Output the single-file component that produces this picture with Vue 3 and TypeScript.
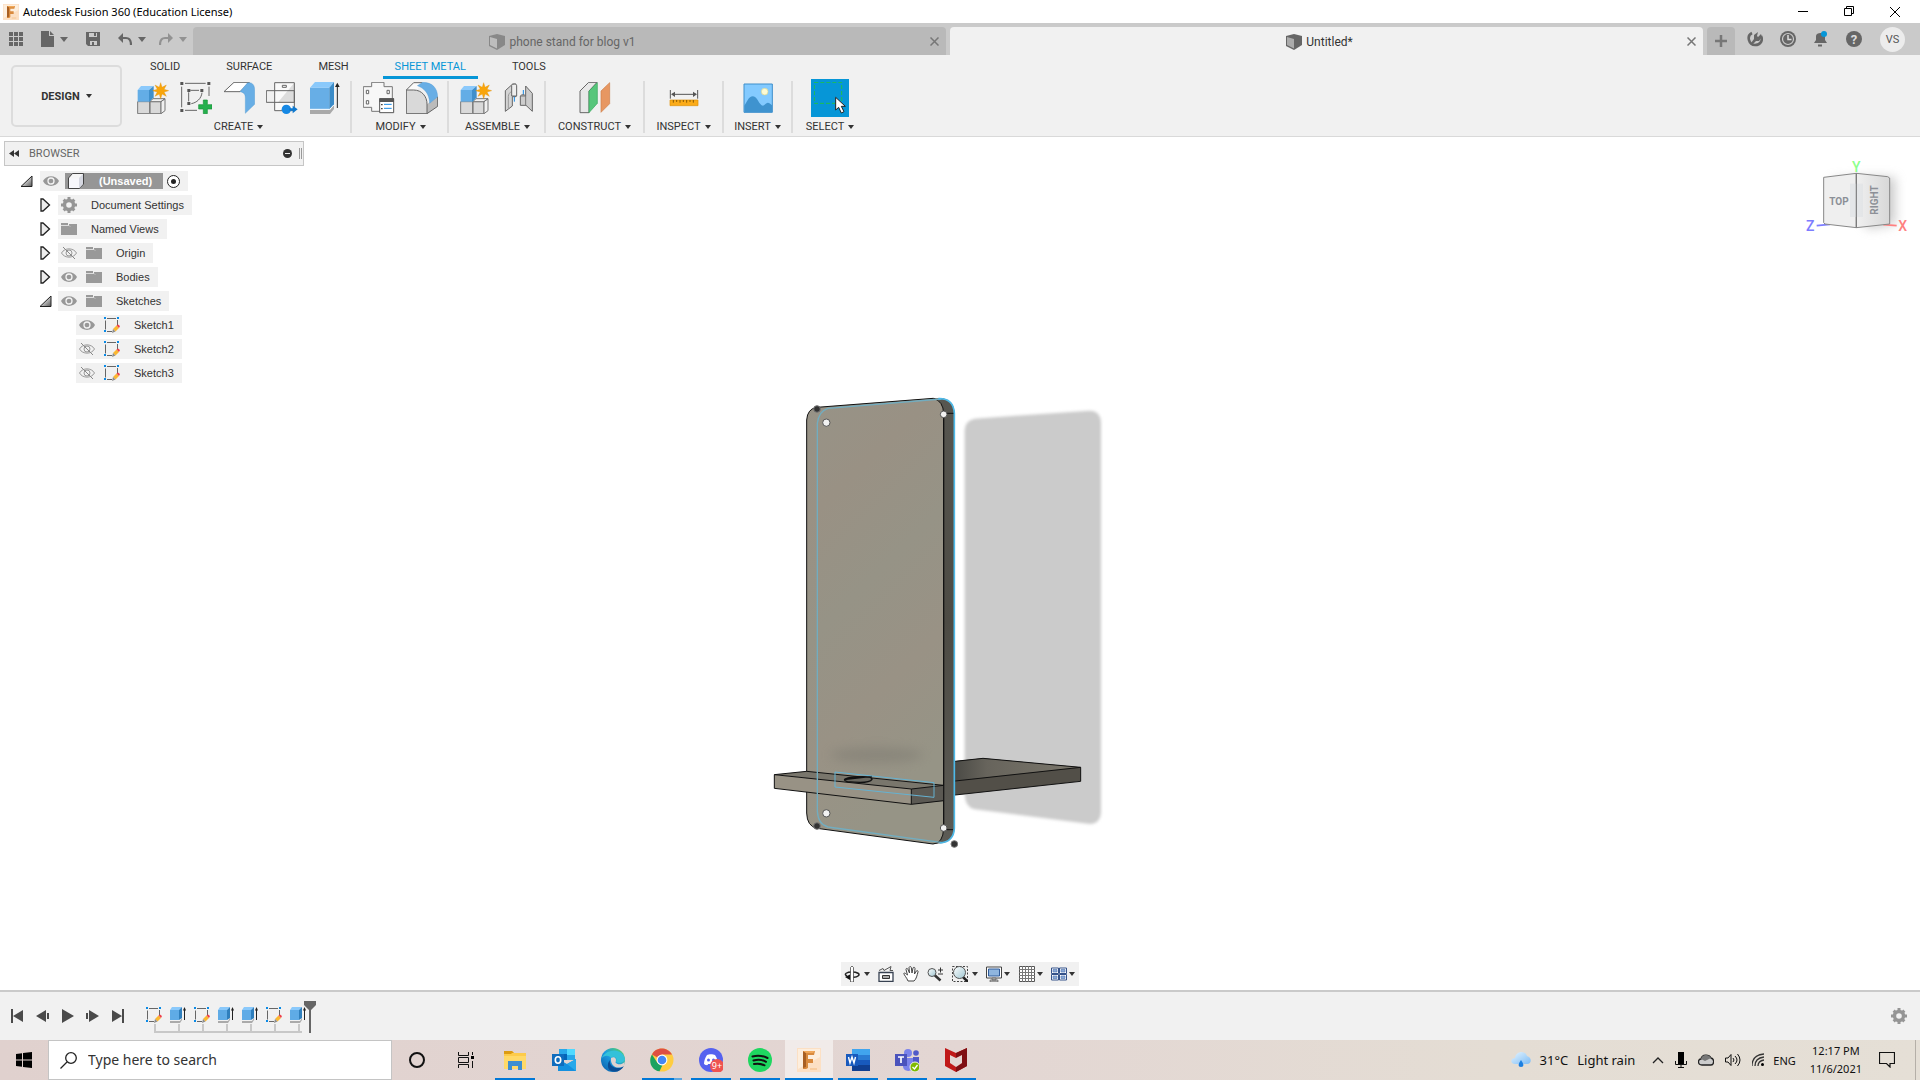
<script setup lang="ts">
import { ref } from 'vue'

interface RibbonGroup {
  name: string
  cls: string
  icons: { id: string; label: string; box: string }[]
}
interface TreeNode {
  label: string
  level: number
  state: 'open' | 'closed' | 'leaf'
  eye: 'on' | 'off' | null
  icon: string
}

function star(cx: number, cy: number, outer: number, inner: number, points: number): string {
  const out: string[] = []
  for (let i = 0; i < points * 2; i++) {
    const r = i % 2 === 0 ? outer : inner
    const a = (Math.PI * i) / points - Math.PI / 2
    out.push(`${(cx + r * Math.cos(a)).toFixed(1)},${(cy + r * Math.sin(a)).toFixed(1)}`)
  }
  return out.join(' ')
}
const sparkle = star(121, 62, 24, 11, 8)

const ribbonTabs = ['SOLID', 'SURFACE', 'MESH', 'SHEET METAL', 'TOOLS']
const activeTab = ref('SHEET METAL')

const groups: RibbonGroup[] = [
  {
    name: 'CREATE',
    cls: 'g-create',
    icons: [
      { id: 'component', label: 'New Component', box: '50 36 96 96' },
      { id: 'newsketch', label: 'Create Sketch', box: '179 36 96 96' },
      { id: 'flange', label: 'Flange', box: '309 36 96 96' },
      { id: 'unfold', label: 'Unfold', box: '438 36 96 96' },
      { id: 'extrude', label: 'Extrude', box: '567 36 96 96' },
    ],
  },
  {
    name: 'MODIFY',
    cls: 'g-modify',
    icons: [
      { id: 'rules', label: 'Sheet Metal Rules', box: '729 36 96 96' },
      { id: 'fillet', label: 'Fillet', box: '858 36 96 96' },
    ],
  },
  {
    name: 'ASSEMBLE',
    cls: 'g-modify',
    icons: [
      { id: 'component', label: 'New Component', box: '50 36 96 96' },
      { id: 'joint', label: 'Joint', box: '70 246 96 96' },
    ],
  },
  { name: 'CONSTRUCT', cls: 'g-construct', icons: [{ id: 'plane', label: 'Offset Plane', box: '298 246 96 96' }] },
  { name: 'INSPECT', cls: 'g-inspect', icons: [{ id: 'measure', label: 'Measure', box: '564 246 96 96' }] },
  { name: 'INSERT', cls: 'g-insert', icons: [{ id: 'picture', label: 'Insert Canvas', box: '784 244 96 96' }] },
  { name: 'SELECT', cls: 'g-select', icons: [{ id: 'select', label: 'Select', box: '1002 246 96 96' }] },
]

const tree: TreeNode[] = [
  { label: 'Document Settings', level: 1, state: 'closed', eye: null, icon: 'gear' },
  { label: 'Named Views', level: 1, state: 'closed', eye: null, icon: 'folder' },
  { label: 'Origin', level: 1, state: 'closed', eye: 'off', icon: 'folder' },
  { label: 'Bodies', level: 1, state: 'closed', eye: 'on', icon: 'folder' },
  { label: 'Sketches', level: 1, state: 'open', eye: 'on', icon: 'folder' },
  { label: 'Sketch1', level: 2, state: 'leaf', eye: 'on', icon: 'sketch' },
  { label: 'Sketch2', level: 2, state: 'leaf', eye: 'off', icon: 'sketch' },
  { label: 'Sketch3', level: 2, state: 'leaf', eye: 'off', icon: 'sketch' },
]

const features = ['sketch', 'body', 'sketch', 'body', 'body', 'sketch', 'body']
const playback = [
  { label: 'Go to start', d: 'M0 0h2v14H0zM12 1v12L2 7z' },
  { label: 'Step back', d: 'M10 1v12L0 7zM11 4h2v6h-2z' },
  { label: 'Play', d: 'M1 0v14l12-7z' },
  { label: 'Step forward', d: 'M3 1v12l10-6zM0 4h2v6H0z' },
  { label: 'Go to end', d: 'M11 0h2v14h-2zM1 1v12l10-6z' },
]
const navTools = [
  { id: 'orbit', label: 'Orbit', menu: true, cls: 'wide' },
  { id: 'lookat', label: 'Look At', menu: false, cls: '' },
  { id: 'pan', label: 'Pan', menu: false, cls: '' },
  { id: 'zoom', label: 'Zoom', menu: false, cls: '' },
  { id: 'fit', label: 'Fit', menu: true, cls: 'wide' },
  { id: 'display', label: 'Display Settings', menu: true, cls: '' },
  { id: 'grid', label: 'Grid and Snaps', menu: true, cls: '' },
  { id: 'viewports', label: 'Viewports', menu: true, cls: '' },
]
const apps = [
  { id: 'cortana', label: 'Cortana', cls: '' },
  { id: 'taskview', label: 'Task View', cls: '' },
  { id: 'explorer', label: 'File Explorer', cls: 'open' },
  { id: 'outlook', label: 'Outlook', cls: '' },
  { id: 'edge', label: 'Edge', cls: '' },
  { id: 'chrome', label: 'Chrome', cls: 'open multi' },
  { id: 'discord', label: 'Discord', cls: 'open' },
  { id: 'spotify', label: 'Spotify', cls: 'open' },
  { id: 'fusion', label: 'Fusion 360', cls: 'open current' },
  { id: 'word', label: 'Word', cls: 'open' },
  { id: 'teams', label: 'Teams', cls: 'open' },
  { id: 'mcafee', label: 'McAfee', cls: 'open' },
]
const query = ref('')
</script>

<template>
  <div class="screen">
    <svg class="defs" aria-hidden="true">
      <defs>
        <linearGradient id="lg-face" x1="0" y1="0" x2=".3" y2="1">
          <stop offset="0" stop-color="#979387" /><stop offset=".25" stop-color="#999184" />
          <stop offset=".5" stop-color="#969386" /><stop offset=".75" stop-color="#999285" />
          <stop offset="1" stop-color="#969486" />
        </linearGradient>
        <linearGradient id="lg-side" x1="0" y1="0" x2="0" y2="1">
          <stop offset="0" stop-color="#575650" /><stop offset=".5" stop-color="#4d4b44" />
          <stop offset="1" stop-color="#5c5b55" />
        </linearGradient>
        <linearGradient id="lg-shelf" x1="0" y1="0" x2="1" y2="0">
          <stop offset="0" stop-color="#444440" /><stop offset=".3" stop-color="#67645c" />
          <stop offset="1" stop-color="#7b776c" />
        </linearGradient>
        <linearGradient id="lg-tri" x1="0" y1="0" x2="1" y2="1">
          <stop offset=".3" stop-color="#eee" /><stop offset="1" stop-color="#555" />
        </linearGradient>
        <linearGradient id="lg-lens" x1="0" y1="0" x2="1" y2="1">
          <stop offset="0" stop-color="#fff" /><stop offset="1" stop-color="#9ec6d2" />
        </linearGradient>
        <linearGradient id="lg-edge" x1="0" y1="1" x2="1" y2="0">
          <stop offset="0" stop-color="#0c59a4" /><stop offset=".5" stop-color="#1b9de2" />
          <stop offset="1" stop-color="#5fd952" />
        </linearGradient>
        <linearGradient id="lg-cloud" x1="0" y1="0" x2="1" y2="1">
          <stop offset="0" stop-color="#e6f5ff" /><stop offset="1" stop-color="#7dbcf5" />
        </linearGradient>
        <linearGradient id="lg-cube" x1="0" y1="0" x2="1" y2="0">
          <stop offset="0" stop-color="#f0f0f0" /><stop offset="1" stop-color="#d8d8d8" />
        </linearGradient>
        <filter id="soft"><feGaussianBlur stdDeviation="4" /></filter>
        <filter id="soft2" x="-30%" y="-100%" width="160%" height="300%"><feGaussianBlur stdDeviation="16" /></filter>
      </defs>

      <!-- ribbon -->
      <symbol id="component" overflow="visible">
        <path d="M52 95h36v36H52zM89 95h33v36H89z" fill="#d9d9d9" stroke="#777" stroke-width="3" />
        <path d="M88 95l10-9h36l-12 9zM122 95l12-9v36l-12 9z" fill="#f0f0f0" stroke="#777" stroke-width="3" />
        <path d="M52 60h34v35H52z" fill="#63ade6" />
        <path d="M52 60l10-12h38l-14 12z" fill="#8bc9fb" />
        <path d="M86 60l14-12v34l-12 13h-2z" fill="#3f8fcb" />
        <polygon :points="sparkle" fill="#f9a50a" stroke="#e28c00" stroke-width="1" />
      </symbol>
      <symbol id="newsketch" overflow="visible">
        <path d="M194 40h62M184 50v62M266 50v28M194 121h36" fill="none" stroke="#666" stroke-width="3" />
        <path d="M210 61h26M205 67v27M245 68c-2 18-16 30-32 33" fill="none" stroke="#666" stroke-width="3" />
        <path d="M180 36h9v9h-9zM261 36h9v9h-9zM180 117h9v9h-9zM201 57h9v9h-9zM240 57h9v9h-9zM201 96h9v9h-9z" fill="#555" />
        <path d="M249 90h12v14h14v13h-14v14h-12v-14h-14v-13h14z" fill="#25b04d" stroke="#169338" stroke-width="2" />
      </symbol>
      <symbol id="flange" overflow="visible">
        <path d="M312 65l30-28h46l-28 28z" fill="#fff" stroke="#666" stroke-width="3" />
        <path d="M360 65l22-26c14-4 22 6 22 20v44l-28 27V84c0-13-6-17-16-19z" fill="#68aee5" stroke="#3f8fcb" stroke-width="1" />
      </symbol>
      <symbol id="unfold" overflow="visible">
        <path d="M464 38h59v84h-59z" fill="#fafafa" />
        <path d="M523 38v60h-50z" fill="#ddd" />
        <path d="M464 38h59v84h-59zM439 62h84v35h-84zM487 46h12v6h-12z" fill="none" stroke="#666" stroke-width="3" />
        <circle cx="499" cy="118" r="14" fill="#1688e4" />
        <path d="M508 115h10v-8l15 11-15 12v-8h-10z" fill="#0f79cf" />
      </symbol>
      <symbol id="extrude" overflow="visible">
        <path d="M570 120h60l12-14v11l-12 15h-60z" fill="#aaa" />
        <path d="M570 53h58v66h-58z" fill="#67aee6" />
        <path d="M570 53l15-17h57l-14 17z" fill="#8ac9fb" />
        <path d="M628 53l14-17v68l-14 15z" fill="#3b8bc7" />
        <path d="M570 118h59l13-14" fill="none" stroke="#fff" stroke-width="3" />
        <path d="M652 114V48" stroke="#222" stroke-width="3" />
        <path d="M645 51l7-13 7 13z" fill="#222" />
      </symbol>
      <symbol id="rules" overflow="visible">
        <path d="M755 37h37v13h25v62h-25v12h-37v-12h-25V50h25z" fill="#f7f7f7" stroke="#777" stroke-width="3" />
        <path d="M739 61h7v10h-7zM739 92h7v10h-7zM801 61h7v10h-7z" fill="#fff" stroke="#666" stroke-width="3" />
        <path d="M779 86h42v42h-42z" fill="#fff" stroke="#555" stroke-width="3" />
        <path d="M778 85h44v11h-44z" fill="#555" />
        <path d="M792 103h23M792 115h23" stroke="#1688e4" stroke-width="3" />
        <path d="M783 102h5v4h-5zM783 114h5v4h-5z" fill="#444" />
      </symbol>
      <symbol id="fillet" overflow="visible">
        <path d="M859 60l24-22h24l-17 22 30 70h-61z" fill="#fafafa" />
        <path d="M859 131V60h22c25 0 40 20 40 42v29z" fill="#d9d9d9" />
        <path d="M921 103l32-24v30l-32 22z" fill="#bbb" />
        <path d="M859 131V60l22-22h26M859 60h22c25 0 40 20 40 42v29h-62M921 131l32-22V80" fill="none" stroke="#666" stroke-width="3" />
        <path d="M892 47l16-10c30 0 44 18 45 43l-24 20c-1-30-17-46-37-53z" fill="#68aee5" stroke="#4a96d2" stroke-width="1" />
      </symbol>
      <symbol id="joint" overflow="visible">
        <path d="M77 272l22-20h10v38h-11v28l-21 16z" fill="#d4d4d4" stroke="#666" stroke-width="3" />
        <path d="M86 326v-36c0-8 4-12 10-16" fill="none" stroke="#999" stroke-width="3" />
        <path d="M96 256c2-5 13-5 15 0v32H96z" fill="#eee" stroke="#666" stroke-width="3" />
        <path d="M104 290v15M131 285v-15" stroke="#1688e4" stroke-width="3" />
        <path d="M138 258l20 22v54l-19-18h-17v-28c3-5 13-5 16 0z" fill="#ccc" stroke="#666" stroke-width="3" />
        <path d="M122 288h16v28" fill="none" stroke="#777" stroke-width="3" />
      </symbol>
      <symbol id="plane" overflow="visible">
        <path d="M301 273l26-26h25l-24 26v65h-27z" fill="#e8e8e8" stroke="#666" stroke-width="3" />
        <path d="M328 273l25-25v62l-25 28z" fill="#57c67b" stroke="#35a65b" stroke-width="2" />
        <path d="M364 273l26-25v63l-26 26z" fill="#e79762" stroke="#cf7f49" stroke-width="2" />
      </symbol>
      <symbol id="measure" overflow="visible">
        <path d="M571 270v26M653 270v26M576 283h72" stroke="#555" stroke-width="3" />
        <path d="M573 283l12-8v16zM651 283l-12-8v16z" fill="#555" />
        <path d="M570 300h84v17h-84z" fill="#fbab18" stroke="#e08e00" stroke-width="2" />
        <path d="M580 300v8M590 300v6M600 300v8M610 300v6M620 300v8M630 300v6M640 300v8" stroke="#8a5a00" stroke-width="3" />
      </symbol>
      <symbol id="picture" overflow="visible">
        <path d="M790 250h85v85h-85z" fill="#83caff" stroke="#3f8fcb" stroke-width="3" />
        <path d="M791 315c8-10 12-28 26-28 14 0 18 28 30 28 6-2 9-9 14-9 6 0 9 5 13 8v20h-83z" fill="#3f93cf" />
        <circle cx="852" cy="273" r="10" fill="#fdfbd4" stroke="#d8d48e" stroke-width="2" />
      </symbol>
      <symbol id="select" overflow="visible">
        <path d="M1003 247h82v63h-82z" fill="none" stroke="#1fc04e" stroke-width="3" stroke-dasharray="12 6" />
        <path d="M1067 292v38l9-8 8 17 8-4-8-16h12z" fill="#fff" stroke="#222" stroke-width="3" />
      </symbol>

      <!-- browser and timeline -->
      <symbol id="sketch" viewBox="0 0 16 16">
        <path d="M3 1.500h9M1.500 3.500v9M3 14.500h5M13.500 3v5" stroke="#666" fill="none" />
        <path d="M0 0h2v2H0zM13 0h2v2h-2zM0 13h2v2H0z" fill="#0a8ae6" />
        <path d="M9 12l3.500-3.500 2.500 2.500-3.500 3.500z" fill="#fbb731" />
        <path d="M12.500 8.500L14 7.500l2 1.500-1 2z" fill="#ee3d4a" />
        <path d="M9 12l2.500 2.500L8 16z" fill="#8c8c8c" />
      </symbol>
      <symbol id="body" viewBox="0 0 16 16">
        <path d="M0 14h10l2-3v2l-2 3H0z" fill="#aaa" />
        <path d="M0 3h9v10H0z" fill="#5fabe6" /><path d="M0 3l2-3h10L9 3z" fill="#8ac9fb" />
        <path d="M9 3l3-3v11l-3 2z" fill="#2f7fbd" />
        <path d="M14.500 13V2" stroke="#222" /><path d="M13 3.500L14.500 0 16 3.500z" fill="#222" />
      </symbol>
      <symbol id="folder" viewBox="0 0 16 16">
        <path d="M0 2h7v2H0zM8 3h8v2H8zM0 5h16v9H0z" fill="#999" /><path d="M0 4.500h8l1 1" stroke="#ddd" fill="none" />
      </symbol>
      <symbol id="gear" viewBox="0 0 16 16">
        <circle cx="8" cy="8" r="4.500" fill="none" stroke="#959595" stroke-width="3.400" />
        <path d="M6.500 0h3v3h-3zM6.500 13h3v3h-3zM0 6.500h3v3H0zM13 6.500h3v3h-3zM1.600 3.700l2.100-2.100 2 2-2.100 2.100zM10.300 12.400l2.100-2.100 2 2-2.100 2.100zM12.300 1.600l2.100 2.100-2 2-2.100-2.100zM3.600 10.300l2.100 2.100-2 2-2.100-2.100z" fill="#959595" />
      </symbol>
      <symbol id="eye-on" viewBox="0 0 16 16">
        <path d="M0 8c3-6.500 13-6.500 16 0-3 6.500-13 6.500-16 0z" fill="#989898" />
        <circle cx="8" cy="8" r="3" fill="none" stroke="#f4f4f4" stroke-width="1.300" />
      </symbol>
      <symbol id="eye-off" viewBox="0 0 16 16">
        <path d="M.5 8c3-5.500 12-5.500 15 0-3 5.500-12 5.500-15 0z" fill="none" stroke="#989898" />
        <circle cx="8" cy="8" r="3" fill="none" stroke="#989898" /><path d="M2 2l12 12" stroke="#888" />
      </symbol>

      <!-- view navigation -->
      <symbol id="orbit" viewBox="0 0 16 16">
        <path d="M3 10C-1 8 3 6 8 6s9 2 6 4c-1 1-4 1.500-7 1" fill="none" stroke="#222" stroke-width="1.500" />
        <path d="M6.500 1.500L8 0l1.500 1.500V16h-3z" fill="#fff" stroke="#333" stroke-width=".7" />
        <path d="M1 11l5-2.500V14z" fill="#111" />
      </symbol>
      <symbol id="lookat" viewBox="0 0 16 16">
        <path d="M1 6.500h14v9H1z" fill="#fff" stroke="#374151" stroke-width="1.300" />
        <path d="M1 4.500l4-2 1 2 7-4-1 4h3" fill="none" stroke="#555" />
        <path d="M4.500 9.500h7v3h-7z" fill="#aaa" stroke="#333" />
      </symbol>
      <symbol id="pan" viewBox="0 0 16 16">
        <path d="M5 15C4 12 1 9 .8 7.500 1.500 6 3.500 8.500 4.500 9L3 3.500C3 2 4.500 2 5 3.500L6.500 7 6 1.500C6.500.2 8 .3 8.300 1.500L9 7l1-5c.5-1.200 2-.8 2 .5L11.500 8 13.300 5c1-1 2-.2 1.700 1-1 3-1.500 7-4 9z" fill="#fff" stroke="#444" />
      </symbol>
      <symbol id="zoom" viewBox="0 0 16 16">
        <path d="M7.500 9l6 5.500" stroke="#333" stroke-width="2.500" />
        <circle cx="5" cy="6.500" r="4" fill="url(#lg-lens)" stroke="#555" />
        <path d="M11 4h5M13.500 1.500v5M11 8h5" stroke="#333" />
      </symbol>
      <symbol id="fit" viewBox="0 0 16 16">
        <path d="M.5.5h15v15H.5z" fill="none" stroke="#444" stroke-dasharray="2 1.500" />
        <path d="M11 11l5 5" stroke="#222" stroke-width="2.500" />
        <circle cx="7.500" cy="6.500" r="6" fill="url(#lg-lens)" stroke="#555" />
      </symbol>
      <symbol id="display" viewBox="0 0 16 16">
        <path d="M.5 1h15v11H.5z" fill="#fff" stroke="#444" /><path d="M2.500 3h11v7h-11z" fill="#8fb5de" stroke="#2f5a99" />
        <path d="M6 12h4v2H6zM4 14h8v2H4z" fill="#bbb" stroke="#555" stroke-width=".6" />
      </symbol>
      <symbol id="grid" viewBox="0 0 16 16">
        <path d="M.5.5h15v15H.5z" fill="#fff" stroke="#555" />
        <path d="M3.500 0v16M6.500 0v16M9.500 0v16M12.500 0v16M0 3.500h16M0 6.500h16M0 9.500h16M0 12.500h16" stroke="#777" />
      </symbol>
      <symbol id="viewports" viewBox="0 0 16 16">
        <path d="M.5 2h7v5.500h-7zM8.500 2h7v5.500h-7zM.5 8.500h7V14h-7zM8.500 8.500h7V14h-7z" fill="#fff" stroke="#34528a" />
        <path d="M2 3.500h4V6H2zM10 3.500h4V6h-4zM2 10h4v2.500H2zM10 10h4v2.500h-4z" fill="#8aa9d6" stroke="#5b7fb8" stroke-width=".7" />
      </symbol>

      <!-- taskbar -->
      <symbol id="cortana" viewBox="0 0 24 24"><circle cx="12" cy="12" r="7" fill="none" stroke="#111" stroke-width="2" /></symbol>
      <symbol id="taskview" viewBox="0 0 24 24">
        <path d="M4.500 4v3.500h10V4M4.500 20v-3.500h10V20M4.500 9.500h10v5h-10zM18.500 4v3M18.500 13v7" fill="none" stroke="#111" /><path d="M17 8h3v3h-3z" />
      </symbol>
      <symbol id="explorer" viewBox="0 0 24 24">
        <path d="M1 3h8l2 2h12v16H1z" fill="#fdcb4a" /><path d="M1 3h8l2 2H9L8 6H1z" fill="#dc9b12" />
        <path d="M1 8h22v13H1z" fill="#ffd968" />
        <path d="M5 22v-9h14v9h-4v-4H9v4z" fill="#3d8ed1" />
      </symbol>
      <symbol id="outlook" viewBox="0 0 24 24">
        <path d="M7 1h16v11H7z" fill="#28a8ea" /><path d="M15 1h8v6h-8z" fill="#50d9ff" /><path d="M7 6h8v6H7z" fill="#0364b8" />
        <path d="M6 11l9 5 9-5v12H6z" fill="#1490df" /><path d="M24 11v12l-9-7z" fill="#28a8ea" />
        <path d="M0 6h12v12H0z" fill="#0f6cbd" />
        <ellipse cx="6" cy="12" rx="2.700" ry="3.200" fill="none" stroke="#fff" stroke-width="1.600" />
      </symbol>
      <symbol id="edge" viewBox="0 0 24 24">
        <circle cx="12" cy="12" r="12" fill="url(#lg-edge)" />
        <path d="M10 10c3-3 7 0 5 4 3 2 7 1 9-2 0-7-8-11-14-9-5 1-8 4-10 8 3-4 8-4 10-1z" fill="#34c1d9" />
        <path d="M9 12c-1 4 2 8 8 8 2 0 4-1 6-2-3 5-8 7-13 5-4-2-4-8-1-11z" fill="#0b4d94" />
        <path d="M10 10c4-2 6 1 4.500 4.500C16 17 21 17 23.500 14L23 18c-7 4-14 0-13-8z" fill="#e0d2cf" />
      </symbol>
      <symbol id="chrome" viewBox="0 0 24 24">
        <circle cx="12" cy="12" r="11.500" fill="#ffcd41" />
        <path d="M12 12L2 6.500C5-1 17-2 22 6.500H12z" fill="#de4f42" />
        <path d="M2 6.500L7.500 15l5 2-3 6.300C1 22-2 13 2 6.500z" fill="#1aa260" />
        <circle cx="12" cy="12" r="5.400" fill="#fff" /><circle cx="12" cy="12" r="4.300" fill="#4587f3" />
      </symbol>
      <symbol id="discord" viewBox="0 0 24 24" overflow="visible">
        <circle cx="12" cy="12" r="12" fill="#5662ef" />
        <path d="M8 7c2-1 6-1 8 0 2 3 3 6 3 9-3 2-4 1-4 0H9c0 1-1 2-4 0 0-3 1-6 3-9z" fill="#fff" />
        <circle cx="9.500" cy="12" r="1.500" fill="#5662ef" /><circle cx="14.500" cy="12" r="1.500" fill="#5662ef" />
        <circle cx="18" cy="18" r="7" fill="#ef5350" />
      </symbol>
      <symbol id="spotify" viewBox="0 0 24 24">
        <circle cx="12" cy="12" r="12" fill="#1ed760" />
        <path d="M4.500 8.500c5-1.500 10-1 15 1.500M5.500 12.500c4-1.200 9-.8 12.500 1.300M6 16c4-.8 7-.5 10.500 1.300" fill="none" stroke="#111" stroke-width="2" stroke-linecap="round" />
      </symbol>
      <symbol id="fusion" viewBox="0 0 24 24">
        <path d="M0 0h24v24H0z" fill="#fce0c4" /><path d="M1 1h22v8L1 21z" fill="#fdeedd" />
        <path d="M6 3h12l-1 4h-6v4h5v4h-5v5l-2 1H6z" fill="#d98a3d" />
        <path d="M6 3l3 2v14l-3 1z" fill="#a85f22" /><path d="M6 3h12l-2 2H9z" fill="#f0a759" />
        <path d="M13 20h7v2h-7z" fill="#f8cda0" />
      </symbol>
      <symbol id="word" viewBox="0 0 24 24">
        <path d="M6 1h18v6H6z" fill="#41a5ee" /><path d="M6 7h18v5H6z" fill="#2b7cd3" /><path d="M6 12h18v5H6z" fill="#185abd" /><path d="M6 17h18v6H6z" fill="#103f91" />
        <path d="M0 6h12v12H0z" fill="#185abd" /><path d="M2.500 9l1.500 6 2-6 2 6 1.500-6" fill="none" stroke="#fff" stroke-width="1.400" />
      </symbol>
      <symbol id="teams" viewBox="0 0 24 24">
        <circle cx="13" cy="5" r="4" fill="#7b83eb" /><circle cx="21" cy="5" r="2.800" fill="#5059c9" />
        <path d="M8 10h11v8c0 6-11 7-11 0z" fill="#7b83eb" /><path d="M18 9h6v7c0 4-5 4-6 2z" fill="#5059c9" />
        <path d="M0 6h12v12H0z" fill="#4b53bc" /><path d="M3 9h6M6 9v6" stroke="#fff" stroke-width="1.700" />
        <circle cx="20" cy="19" r="5" fill="#7fba00" stroke="#eee" /><path d="M17.500 19l2 2 3-4" stroke="#fff" stroke-width="1.300" fill="none" />
      </symbol>
      <symbol id="mcafee" viewBox="0 0 24 24">
        <path d="M1 0l11 5 11-5v18l-11 6-11-6z" fill="#c01818" /><path d="M23 0v18l-11 6v-5l6-4V7l-6 3V5z" fill="#7f1014" /><path d="M6 7l6 3 6-3v8l-6 4-6-4z" fill="#e3d6d3" />
      </symbol>
      <symbol id="model-icon" viewBox="0 0 16 16">
        <path d="M0 2l8-2 8 2v9l-8 5-8-4z" fill="currentColor" /><path d="M1 3l7 2v9.500L1 11z" fill="#fff" opacity=".45" />
      </symbol>
    </svg>

    <header class="titlebar">
      <svg class="app-logo" width="16" height="16"><use href="#fusion" /></svg>
      <span class="app-name">Autodesk Fusion 360 (Education License)</span>
      <div class="win-controls">
        <button aria-label="Minimize"><svg width="12" height="12"><path d="M1 5.500h10" stroke="#000" /></svg></button>
        <button aria-label="Restore"><svg width="12" height="12"><path d="M1.500 2.500h7v7h-7zM3.500 2V.5h7v7H9" fill="none" stroke="#000" /></svg></button>
        <button aria-label="Close"><svg width="12" height="12"><path d="M1 1l10 10M11 1L1 11" stroke="#000" fill="none" /></svg></button>
      </div>
    </header>

    <div class="tabbar">
      <div class="quick">
        <button aria-label="Data Panel"><svg width="14" height="14"><path d="M0 0h4v4H0zM5 0h4v4H5zM10 0h4v4h-4zM0 5h4v4H0zM5 5h4v4H5zM10 5h4v4h-4zM0 10h4v4H0zM5 10h4v4H5zM10 10h4v4h-4z" fill="#666" /></svg></button>
        <button class="drop" aria-label="File"><svg width="13" height="16"><path d="M0 0h8v5h5v11H0zM9 0l4 4H9z" fill="#666" /></svg><i class="caret"></i></button>
        <button aria-label="Save"><svg width="14" height="14"><path d="M0 0h14v14H2l-2-2z" fill="#666" /><path d="M3 1h8v4H3zM4 9h7v4H4z" fill="#ccc" /><path d="M8 1h2v3H8zM6 10h2v3H6z" fill="#666" /></svg></button>
        <button class="drop" aria-label="Undo"><svg width="14" height="13"><path d="M2 5h6c3 0 5 2 5 7" fill="none" stroke="#666" stroke-width="2.200" /><path d="M0 5l5-5v10z" fill="#666" /></svg><i class="caret"></i></button>
        <button class="drop faded" aria-label="Redo"><svg width="14" height="13"><path d="M12 5H6c-3 0-5 2-5 7" fill="none" stroke="#666" stroke-width="2.200" /><path d="M14 5L9 0v10z" fill="#666" /></svg><i class="caret"></i></button>
      </div>
      <div class="doc-tab back">
        <span class="doc-name"><svg width="16" height="16"><use href="#model-icon" /></svg>phone stand for blog v1</span>
        <button aria-label="Close phone stand for blog"><svg width="9" height="9"><path d="M.5.5l8 8M8.500.5l-8 8" stroke="#777" stroke-width="1.500" /></svg></button>
      </div>
      <div class="doc-tab front">
        <span class="doc-name"><svg width="16" height="16"><use href="#model-icon" /></svg>Untitled*</span>
        <button aria-label="Close Untitled"><svg width="9" height="9"><path d="M.5.5l8 8M8.500.5l-8 8" stroke="#777" stroke-width="1.500" /></svg></button>
      </div>
      <button class="new-tab" aria-label="New Design"><svg width="14" height="14"><path d="M7 1v12M1 7h12" stroke="#777" stroke-width="2.500" /></svg></button>
      <div class="account">
        <button aria-label="Extensions"><svg width="16" height="16"><path d="M5 2C-1 5 2 14 8 14c6 0 8-5 6-9" fill="none" stroke="#666" stroke-width="2.600" /><path d="M4 12l3-4V4l4-3-1 4 1 1 3-3 1 3-3 4H9l-4 4z" fill="#666" /></svg></button>
        <button aria-label="Job Status"><svg width="16" height="16"><circle cx="8" cy="8" r="8" fill="#666" /><circle cx="8" cy="8" r="5.500" fill="none" stroke="#ccc" stroke-width="1.200" /><path d="M8 4v4.500h3.500" stroke="#ddd" stroke-width="1.500" fill="none" /></svg></button>
        <button aria-label="Notifications"><svg width="16" height="16"><path d="M1 12l2-3V5c0-4 9-4 9 0v4l2 3zM5 13.500h4v2H5z" fill="#666" /><circle cx="11" cy="3" r="3" fill="#0696d7" /></svg></button>
        <button class="help" aria-label="Help">?</button>
        <button class="avatar" aria-label="Account">VS</button>
      </div>
    </div>

    <div class="ribbon">
      <button class="workspace">DESIGN<i class="caret dark"></i></button>
      <div class="ribbon-main">
        <nav class="ribbon-tabs">
          <button v-for="t in ribbonTabs" :key="t" :class="{ active: t === activeTab }" @click="activeTab = t">{{ t }}</button>
        </nav>
        <div class="groups">
          <section v-for="g in groups" :key="g.name" class="group" :class="g.cls">
            <div class="group-icons">
              <button v-for="i in g.icons" :key="i.id" :aria-label="i.label"><svg width="32" height="32" :viewBox="i.box"><use :href="'#' + i.id" /></svg></button>
            </div>
            <button class="group-label">{{ g.name }}<i class="caret dark"></i></button>
          </section>
        </div>
      </div>
    </div>

    <main class="canvas">
      <aside class="browser">
        <div class="browser-head">
          <svg width="11" height="7"><path d="M5 0v7L0 3.500zM10 0v7L5 3.500z" fill="#333" /></svg>
          <span>BROWSER</span>
          <button aria-label="Collapse all"><svg width="9" height="9"><circle cx="4.500" cy="4.500" r="4.500" fill="#333" /><path d="M2 4.500h5" stroke="#eee" /></svg></button>
          <i class="grip"></i>
        </div>
        <ul class="tree">
          <li class="root">
            <button class="twist" aria-label="Collapse"><svg width="13" height="12"><path d="M12 1v10.500H1z" fill="url(#lg-tri)" stroke="#222" /></svg></button>
            <div class="node">
              <svg width="16" height="16"><use href="#eye-on" /></svg>
              <span class="root-name"><svg width="16" height="16"><path d="M.5 5l4-4.500h11V11l-4 4.500H.5z" fill="#f5f5f5" stroke="#444" /><path d="M1 5h10v10h1l3-4V1l-4 4" fill="#c9ccd8" opacity=".7" /><path d="M1 5.500h10V15H1z" fill="#f7f7fb" /></svg><b>(Unsaved)</b></span>
              <svg width="13" height="13"><circle cx="6.500" cy="6.500" r="6" fill="#fff" stroke="#222" /><circle cx="6.500" cy="6.500" r="2.500" fill="#222" /></svg>
            </div>
          </li>
          <li v-for="n in tree" :key="n.label" :class="'level' + n.level">
            <button v-if="n.state !== 'leaf'" class="twist" :aria-label="n.state === 'open' ? 'Collapse' : 'Expand'">
              <svg v-if="n.state === 'open'" width="13" height="12"><path d="M11 1v10.500H0z" fill="url(#lg-tri)" stroke="#222" /></svg>
              <svg v-else width="11" height="14"><path d="M1 1h2l6.500 6L3 13H1z" fill="#ededed" stroke="#222" stroke-width="1.300" /></svg>
            </button>
            <div class="node">
              <svg v-if="n.eye" width="16" height="16"><use :href="'#eye-' + n.eye" /></svg>
              <svg width="16" height="16"><use :href="'#' + n.icon" /></svg>
              <span>{{ n.label }}</span>
            </div>
          </li>
        </ul>
      </aside>

      <svg class="model" width="360" height="480" viewBox="0 0 1080 1440" role="img" aria-label="Phone stand model">
        <path d="M614 150q2-28 30-34l345-24q32 0 34 36v1168q-2 36-34 36l-345-44q-30-8-30-50z" fill="#cbcbcb" filter="url(#soft)" />
        <path d="M560 1146l109-11 293 27v42l-375 41h-27z" fill="#524f48" />
        <path d="M560 1146l109-11 293 27-402 43z" fill="url(#lg-shelf)" />
        <path d="M585 1144l84-9 293 27v42l-377 41M585 1203l377-41" fill="none" stroke="#111" stroke-width="3" />
        <path d="M520 55h30q32 6 34 44v1245q-2 40-40 46l-25 2z" fill="url(#lg-side)" />
        <path d="M140 120q2-34 31-38l349-27q30 8 31 46v1244q-2 46-32 47l-348-47q-30-6-31-46z" fill="url(#lg-face)" />
        <ellipse cx="350" cy="1125" rx="140" ry="22" fill="#74726a" opacity=".4" filter="url(#soft2)" />
        <path d="M140 120q2-34 31-38l349-27q30 8 31 46v1244q-2 46-32 47l-348-47q-30-6-31-46z" fill="none" stroke="#111" stroke-width="3" />
        <path d="M551 100h31M551 1349h28" stroke="#111" stroke-width="3" />
        <path d="M43 1184l97-10 411 43-97 12z" fill="#79766c" />
        <path d="M43 1184l411 43v46L43 1225z" fill="#989285" />
        <path d="M454 1227l97-11v47l-97 10z" fill="#5b5953" />
        <path d="M140 1174l-97 10v41l411 48 97-11M43 1184l411 43 97-11M454 1227v46M140 1174l411 42" fill="none" stroke="#111" stroke-width="3" />
        <path d="M551 100v1245" stroke="#111" stroke-width="3" />
        <path d="M252 1199l84-10M262 1205q-24-8 20-14 56-4 54 7-8 14-74 7z" fill="#69675f" stroke="#111" stroke-width="4" />
        <path d="M225 1176l297 32v44l-297-31z" fill="none" stroke="#65b2d2" stroke-width="3" />
        <path d="M548 1388L204 1341q-30-8-32-48V130q4-36 32-45l340-28" fill="none" stroke="#72adc0" stroke-width="4" />
        <path d="M535 56q46-2 48 44v1245q-2 42-44 44" fill="none" stroke="#4eb9e8" stroke-width="5" />
        <g stroke-width="3">
          <g fill="#f2f2f2" stroke="#555"><circle cx="199" cy="128" r="11" /><circle cx="551" cy="103" r="10" /><circle cx="199" cy="1300" r="11" /><circle cx="551" cy="1344" r="10" /></g>
          <g fill="#333" stroke="#777"><circle cx="171" cy="87" r="10" /><circle cx="171" cy="1338" r="10" /><circle cx="583" cy="1392" r="10" /></g>
        </g>
      </svg>

      <svg class="viewcube" width="140" height="110" viewBox="0 0 420 330" role="img" aria-label="View cube">
        <path d="M150 120l100-8 96 0v140l-80 14z" fill="#999" opacity=".5" filter="url(#soft2)" />
        <path d="M110 257l40-4" stroke="#7d7dff" stroke-width="5" /><path d="M310 254l40 3" stroke="#ff8080" stroke-width="5" />
        <path d="M131 112l98-12v163l-94-11-4-4z" fill="#efefef" stroke="#888" stroke-width="3" />
        <path d="M229 100l94 10 6 4v138l-100 11z" fill="url(#lg-cube)" stroke="#888" stroke-width="3" />
        <path d="M210 131h39v100h-39z" fill="#dfe2e6" opacity=".7" /><path d="M229 100v163" stroke="#777" stroke-width="3" />
        <g font-family="Roboto, sans-serif" font-weight="700" text-anchor="middle">
          <g fill="#8c9097">
            <text x="177" y="194" font-size="30">TOP</text>
            <text transform="translate(295 180) rotate(-90)" font-size="30">RIGHT</text>
          </g>
          <g font-size="42" font-weight="500">
            <text x="229" y="97" fill="#8cff8c">Y</text>
            <text x="91" y="272" fill="#7d7dff">Z</text>
            <text x="368" y="272" fill="#ff8080">X</text>
          </g>
        </g>
      </svg>

      <div class="nav-tools">
        <button v-for="t in navTools" :key="t.id" :class="t.cls" :aria-label="t.label"><svg width="16" height="16"><use :href="'#' + t.id" /></svg><i v-if="t.menu" class="caret dark"></i></button>
      </div>
    </main>

    <footer class="timeline">
      <div class="playback">
        <button v-for="p in playback" :key="p.label" :aria-label="p.label"><svg width="13" height="14"><path :d="p.d" fill="#4a4a4a" /></svg></button>
      </div>
      <div class="features">
        <button v-for="(f, i) in features" :key="i" :aria-label="f"><svg width="16" height="16"><use :href="'#' + f" /></svg></button>
        <svg class="marker" width="12" height="32"><path d="M0 0h12v4L7 9v23H5V9L0 4z" fill="#666" /></svg>
      </div>
      <button class="settings" aria-label="Timeline settings"><svg width="16" height="16"><use href="#gear" /></svg></button>
    </footer>

    <div class="taskbar">
      <button class="start" aria-label="Start"><svg width="16" height="16"><path d="M0 2l6-.8V7.500H0zM7 1l9-1v7.500H7zM0 8.500h6v6.300L0 14zM7 8.500h9V16l-9-1z" /></svg></button>
      <label class="search">
        <svg width="17" height="17"><circle cx="11" cy="6" r="5.300" fill="none" stroke="#222" stroke-width="1.300" /><path d="M7 10l-6.500 6.500" stroke="#222" stroke-width="1.300" /></svg>
        <input v-model="query" type="text" placeholder="Type here to search" aria-label="Search" />
      </label>
      <div class="apps">
        <button v-for="a in apps" :key="a.id" :class="a.cls" :aria-label="a.label">
          <svg width="24" height="24"><use :href="'#' + a.id" /></svg>
          <span v-if="a.id === 'discord'" class="badge">9+</span>
        </button>
      </div>
      <div class="tray">
        <button class="weather">
          <svg width="20" height="16"><path d="M4 12C-1 12-1 6 4 6c1-7 10-8 12-2 5 1 5 8 0 8z" fill="url(#lg-cloud)" /><path d="M10 8q5 7 0 7t0-7z" fill="#1c7fe0" /></svg>
          <span>31°C</span><span>Light rain</span>
        </button>
        <button aria-label="Hidden icons"><svg width="12" height="8"><path d="M1 7l5-5 5 5" fill="none" stroke="#222" stroke-width="1.300" /></svg></button>
        <button aria-label="Microphone"><svg width="12" height="16"><path d="M3 0h6v12H3z" /><path d="M.5 9v3.500h11V9M6 12v4M3 15.500h6" fill="none" stroke="#111" /></svg></button>
        <button aria-label="OneDrive"><svg width="16" height="12"><path d="M4 11C-1 11 0 5 3 5c1-5 8-5 10-1 4 1 3 7 0 7z" fill="#ccc" stroke="#222" stroke-width="1.300" /><path d="M3 5c1-5 8-5 10-1L7 7z" fill="#777" /></svg></button>
        <button aria-label="Volume"><svg width="16" height="14"><path d="M.5 5H3l3-3.500v11L3 9H.5z" fill="none" stroke="#111" /><path d="M8 5q2 2 0 4M10 3q4 4 0 8M12.500 1q5 6 0 12" fill="none" stroke="#111" /></svg></button>
        <button aria-label="Network"><svg width="12" height="14" viewBox="1 0 12 14"><path d="M1 13Q1 2 13 1M4 13q0-8 9-9M7 13q0-5 6-6" fill="none" stroke="#333" stroke-width="1.300" /><circle cx="11.500" cy="11.500" r="1.500" /></svg></button>
        <button class="lang">ENG</button>
        <button class="clock"><span>12:17 PM</span><span>11/6/2021</span></button>
        <button class="action" aria-label="Notifications"><svg width="16" height="16"><path d="M.5.500h15v11H11v3.500L7.500 11.500h-7z" fill="none" stroke="#111" stroke-width="1.200" /></svg></button>
        <button class="peek" aria-label="Show desktop"></button>
      </div>
    </div>
  </div>
</template>

<style>
body { margin: 0; }
</style>

<style scoped>
.screen { min-height: 100vh; display: flex; flex-direction: column; background: #fff; font-family: Roboto, "Liberation Sans", sans-serif; color: #333; }
.screen * { box-sizing: border-box; }
.defs { position: absolute; width: 0; height: 0; }
button { border: 0; padding: 0; margin: 0; background: none; font: inherit; color: inherit; display: flex; align-items: center; justify-content: center; }
svg { display: block; flex: none; }
.caret { width: 0; height: 0; border: 4px solid transparent; border-top: 5px solid #666; border-bottom: 0; }
.caret.dark { border-width: 4px 3px 0; border-top-color: #333; }

.titlebar { height: 23px; display: flex; align-items: center; padding: 0 3px; font: 12px/16px "Noto Sans", "Open Sans", sans-serif; color: #000; }
.app-name { margin-left: 4px; font-size: 11px; }
.win-controls { margin-left: auto; display: flex; gap: 34px; padding-right: 16px; }

.tabbar { height: 32px; background: #cacaca; display: flex; align-items: flex-end; }
.quick { width: 193px; height: 32px; display: flex; align-items: center; gap: 18px; padding-left: 9px; }
.drop { gap: 6px; }
.faded { opacity: .55; margin-left: -5px; }
.doc-tab { flex: 1; height: 28px; border-radius: 4px 4px 0 0; display: flex; align-items: center; padding: 1px 7px 0 2px; font-size: 12px; line-height: 16px; }
.doc-name { flex: 1; display: flex; justify-content: center; align-items: center; gap: 4px; color: #333; }
.doc-tab svg { color: #666; }
.doc-tab.back { background: #b9b9b9; margin-right: 4px; }
.doc-tab.back .doc-name { color: #666; }
.doc-tab.back .doc-name svg { color: #888; }
.doc-tab.front { background: #f1f1f1; }
.new-tab { width: 28px; height: 28px; margin-left: 4px; background: #b9b9b9; border-radius: 4px 4px 0 0; }
.account { height: 32px; width: 185px; display: flex; align-items: center; gap: 17px; padding-left: 12px; }
.help { width: 16px; height: 16px; border-radius: 50%; background: #666; color: #ddd; font-size: 13px; font-weight: 700; }
.avatar { width: 25px; height: 25px; margin-left: 1px; border-radius: 50%; background: #ececec; color: #555; font-size: 11px; }

.ribbon { height: 82px; background: #f1f1f1; border-bottom: 1px solid #d9d9d9; display: flex; }
.workspace { width: 111px; height: 62px; margin: 10px 3px 0 11px; border: 2px solid #dcdcdc; border-radius: 5px; font-size: 11px; font-weight: 700; gap: 6px; }
.ribbon-main { display: flex; flex-direction: column; }
.ribbon-tabs { display: flex; gap: 22px; padding-left: 13px; }
.ribbon-tabs button { height: 24px; padding: 2px 12px 0; border-bottom: 3px solid transparent; font-size: 11px; line-height: 16px; }
.ribbon-tabs button.active { color: #0696d7; border-color: #0696d7; }
.groups { display: flex; }
.group { display: flex; flex-direction: column; align-items: center; border-right: 2px solid #dcdcdc; height: 52px; margin-top: 2px; }
.group:last-child { border: 0; }
.group-icons { display: flex; flex: none; gap: 11px; height: 38px; align-items: center; margin-top: -2px; }
.group-label { flex: none; height: 16px; margin-top: 2px; font-size: 11px; line-height: 16px; gap: 4px; white-space: nowrap; }
.g-create { width: 227px; padding-left: 2px; }
.g-modify { width: 97px; padding-left: 2px; }
.g-construct { width: 99px; }
.g-inspect { width: 79px; }
.g-insert { width: 69px; }
.g-select { width: 74px; }
.g-select .group-icons button { width: 38px; height: 38px; background: #0696d7; }

.canvas { flex: 1; position: relative; min-height: 700px; overflow: hidden; }
.browser { width: 300px; margin: 4px 0 0 4px; }
.browser-head { height: 25px; border: 1px solid #c6c6c6; background: #f1f1f1; display: flex; align-items: center; padding: 0 1px 0 4px; font-size: 11px; color: #666; }
.browser-head span { margin-left: 9px; flex: 1; }
.grip { width: 3px; height: 11px; margin-left: 7px; border: solid #999; border-width: 0 1px; }
.tree { list-style: none; margin: 5px 0 0; padding: 0; font: 11px/20px "Liberation Sans", Arial, sans-serif; }
.tree li { display: flex; height: 20px; margin-bottom: 4px; }
.twist { width: 18px; flex: none; justify-content: flex-start; }
.node { display: flex; align-items: center; gap: 9px; background: #f1f1f1; padding: 0 8px 0 3px; }
.node span { margin-left: 5px; }
.root { padding-left: 16px; }
.root .twist { width: 20px; }
.root .node { gap: 4px; }
.root .node .root-name { margin-left: 2px; display: flex; align-items: center; height: 16px; gap: 15px; padding: 0 11px 0 3px; background: #969696; color: #fff; }
.level1 { padding-left: 36px; }
.level2 { padding-left: 72px; }

.model { position: absolute; left: calc(50% - 200px); top: 243px; }
.viewcube { position: absolute; right: 0; top: 3px; }
.nav-tools { position: absolute; left: 50%; bottom: 4px; transform: translateX(-50%); width: 238px; height: 24px; padding: 0 4px 0 3px; display: flex; align-items: center; justify-content: space-between; background: #f1f1f1; }
.nav-tools button { gap: 2px; }
.nav-tools .wide { gap: 4px; }

.timeline { height: 50px; border-top: 2px solid #cacaca; background: #f1f1f1; display: flex; align-items: center; }
.playback { display: flex; gap: 12px; padding-left: 11px; }
.features { display: flex; gap: 8px; height: 48px; margin-left: 22px; padding-top: 15px; position: relative; align-items: flex-start; }
.features button { position: relative; height: 26px; align-items: flex-start; }
.features button::after { content: ""; position: absolute; left: 8px; right: -16px; bottom: 0; height: 7px; border: solid #c8c8c8; border-width: 0 0 2px 2px; }
.features button:nth-last-child(2)::after { width: 2px; right: auto; }
.marker { position: absolute; right: -10px; top: 9px; }
.settings { margin-left: auto; margin-right: 13px; }

.taskbar { height: 40px; display: flex; background: linear-gradient(90deg, #e0d1ce, #e3d6d3 50%, #e4ddd4 78%, #e5dfd6); font-family: "Noto Sans", "Open Sans", sans-serif; color: #111; }
.start { width: 48px; }
.search { width: 344px; display: flex; align-items: center; gap: 11px; padding-left: 11px; background: #fff; border: 1px solid #c4c4c4; }
.search input { flex: 1; min-width: 0; border: 0; outline: 0; padding: 0; background: none; font: 14px/20px "Noto Sans", "Open Sans", sans-serif; color: #222; }
.search input::placeholder { color: #333; opacity: 1; }
.apps { display: flex; gap: 1px; padding-left: 1px; }
.apps button { width: 48px; height: 40px; position: relative; }
.open::after { content: ""; position: absolute; left: 4px; right: 4px; bottom: 0; height: 2px; background: #0078d7; }
.multi::after { background: linear-gradient(90deg, #0078d7 80%, #5fa8e0 80%); }
.current { background: #f1ebe9; }
.current::after { left: 0; right: 0; }
.badge { position: absolute; left: 23px; top: 20px; width: 14px; font-size: 9px; line-height: 12px; color: #fff; text-align: center; }
.tray { margin-left: auto; display: flex; align-items: center; gap: 11px; }
.weather { gap: 9px; font-size: 13px; margin-right: 6px; }
.lang { font-size: 11px; margin: 0 3px 0 -2px; }
.clock { flex-direction: column; font-size: 11px; line-height: 18px; }
.action { margin-left: 6px; }
.peek { width: 5px; height: 40px; margin-left: 9px; border-left: 1px solid #b5afa8; }
</style>
